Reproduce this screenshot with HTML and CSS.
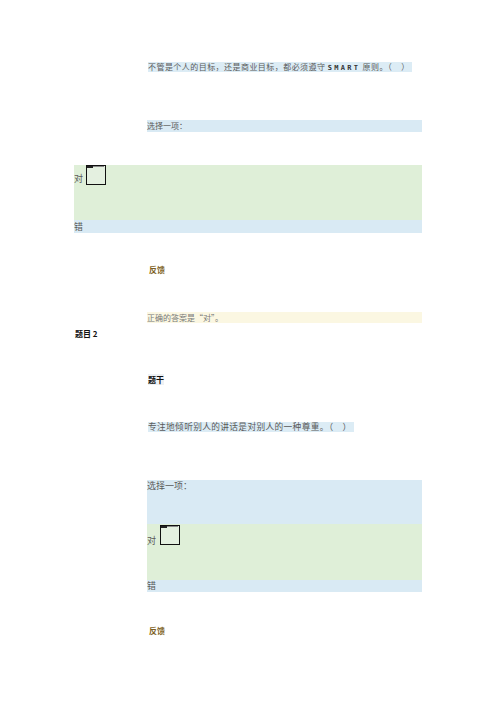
FILE: index.html
```html
<!DOCTYPE html>
<html lang="zh">
<head>
    <meta charset="UTF-8">
    <meta name="viewport" content="width=device-width, initial-scale=1.0">
    <title>题目</title>
    <link rel="stylesheet" href="styles.css">
</head>
<body>

<div class="page">
    <!-- 题目 1 -->
    <div class="stem stem-1"><span class="hl">不管是个人的目标，还是商业目标，都必须遵守 <b class="smart">SMART</b> 原则。（&nbsp;&nbsp;&nbsp;&nbsp;）</span></div>

    <div class="prompt">选择一项：</div>

    <div class="answers answers-1">
        <div class="opt opt-right">
            <span>对</span>
            <span class="box"></span>
        </div>
        <div class="opt opt-wrong">错</div>
    </div>

    <div class="label-fb fb-1">反馈</div>

    <div class="right-answer">正确的答案是“对”。</div>

    <!-- 题目 2 -->
    <div class="qno">题目 2</div>

    <div class="label-stem"><span>题干</span></div>

    <div class="stem stem-2"><span class="hl">专注地倾听别人的讲话是对别人的一种尊重。（&nbsp;&nbsp;&nbsp;&nbsp;）</span></div>

    <div class="answers answers-2">
        <div class="choose">选择一项：</div>
        <div class="opt opt-right">
            <span>对</span>
            <span class="box"></span>
        </div>
        <div class="opt opt-wrong">错</div>
    </div>

    <div class="label-fb fb-2">反馈</div>
</div>

</body>
</html>
```

FILE: styles.css
```css
body {
    margin: 0;
    background-color: #fff;
    font-family: "Noto Sans CJK SC", "Noto Sans", sans-serif;
    color: #5a5a5a;
}
.page {
    width: 496px;
    padding-top: 1px;
    padding-bottom: 40px;
}
.stem {
    display: flex;
    margin-left: 148px;
    height: 10px;
}
.stem-1 {
    margin-top: 61px;
}
.stem-2 {
    margin-top: 37px;
}
.hl {
    display: block;
    background-color: #dcecf5;
    font-size: 8px;
    letter-spacing: 0.45px;
    line-height: 10px;
    height: 10px;
    padding-right: 2px;
    white-space: nowrap;
}
.stem-2 .hl {
    font-size: 8.7px;
    letter-spacing: 0.35px;
}
.smart {
    font-family: "DejaVu Sans Mono", monospace;
    font-size: 7px;
    letter-spacing: 2.3px;
    color: #333;
}
.prompt {
    margin: 48px 0 0 147px;
    width: 275px;
    height: 12px;
    line-height: 12px;
    font-size: 8px;
    background-color: #d9eaf4;
}
.answers {
    font-size: 9px;
}
.answers-1 {
    margin: 33px 0 0 74px;
    width: 348px;
}
.answers-2 {
    margin: 48px 0 0 147px;
    width: 275px;
}
.choose {
    background-color: #d9eaf4;
    height: 44px;
    line-height: 12px;
}
.opt-right {
    display: flex;
    align-items: flex-start;
    gap: 3px;
    background-color: #dfefd8;
    height: 55px;
}
.opt-right span:first-child {
    line-height: 11px;
    margin-top: 8px;
}
.answers-2 .opt-right {
    height: 56px;
    gap: 4px;
}
.answers-2 .opt-right span:first-child {
    margin-top: 11px;
}
.box {
    position: relative;
    width: 18px;
    height: 18px;
    border: 1.5px solid #111;
    background-color: #e4f0e0;
}
.answers-2 .box {
    margin-top: 1px;
}
.box::before {
    content: "";
    position: absolute;
    top: 0;
    left: 0;
    width: 6px;
    height: 2px;
    background-color: #222;
}
.box::after {
    content: "";
    position: absolute;
    top: 0;
    left: 6px;
    width: 11px;
    height: 1px;
    background-color: #888;
}
.opt-wrong {
    background-color: #d9eaf4;
    height: 13px;
    line-height: 13px;
}
.answers-2 .opt-wrong {
    height: 12px;
    line-height: 12px;
}
.label-fb {
    margin-left: 149px;
    height: 10px;
    line-height: 10px;
    font-size: 8px;
    font-weight: bold;
    color: #7d5f22;
}
.fb-1 {
    margin-top: 32px;
}
.fb-2 {
    margin-top: 34px;
}
.right-answer {
    margin: 37px 0 0 147px;
    width: 275px;
    height: 11px;
    line-height: 11px;
    font-size: 8px;
    background-color: #fbf7e2;
    color: #777;
}
.qno {
    margin: 6px 0 0 75px;
    height: 10px;
    line-height: 10px;
    font-size: 8px;
    font-weight: bold;
    color: #111;
}
.label-stem {
    margin: 36px 0 0 148px;
    height: 10px;
    line-height: 10px;
    font-size: 8px;
    font-weight: bold;
    color: #111;
}
.label-stem span {
    background-color: #eef1f4;
}
```
